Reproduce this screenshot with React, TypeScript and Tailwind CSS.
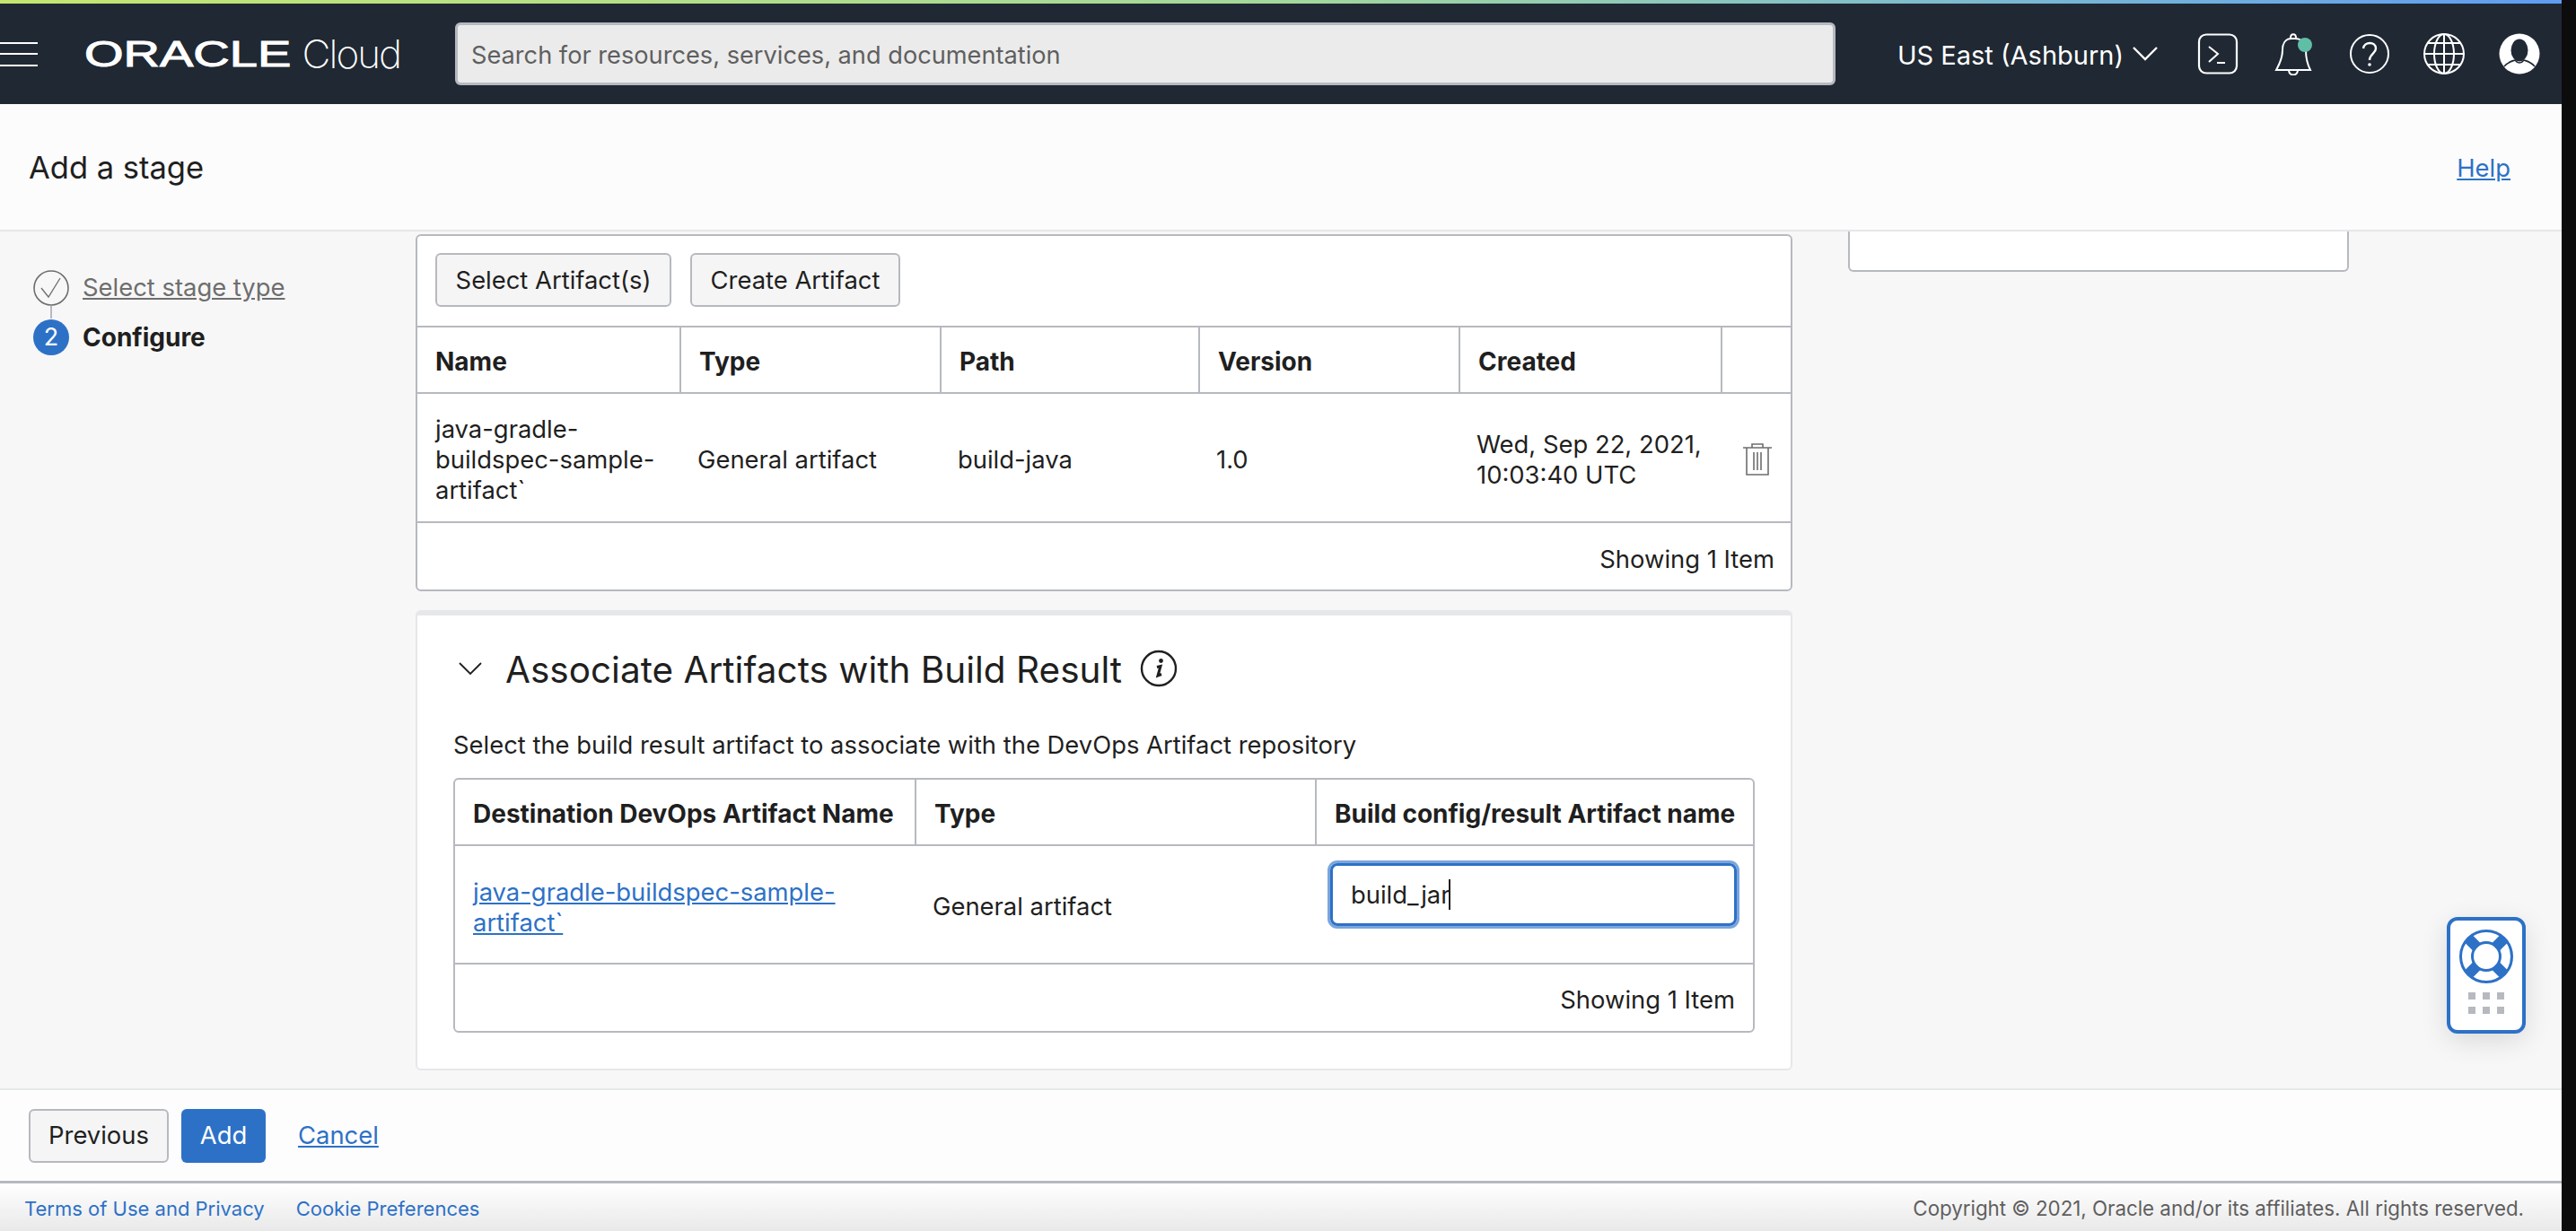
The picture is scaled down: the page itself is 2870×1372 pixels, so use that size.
import { ReactNode } from "react"

const hdrCell = "flex items-center px-5 pt-[4px] text-[28px] font-bold border-l-2 border-[#b6b9bf] first:border-l-0"

function Hamburger() {
  return (
    <div className="flex w-[42px] flex-col gap-[10.5px]">
      <div className="h-[2px] bg-white" />
      <div className="h-[2px] bg-white" />
      <div className="h-[2px] bg-white" />
    </div>
  )
}

function Logo() {
  return (
    <div className="ml-[52px] flex w-[352px] items-center text-white">
      <span className="inline-block w-[228px] origin-left scale-x-[1.4] font-['Liberation_Sans',sans-serif] text-[40px] leading-none [-webkit-text-stroke:1px_white]">
        ORACLE
      </span>
      <span className="ml-[15px] text-[44px] leading-none font-extralight tracking-[-2px]">Cloud</span>
    </div>
  )
}

function TopIcons() {
  return (
    <div className="flex items-center">
      <svg width="46" height="46" viewBox="0 0 46 46" fill="none" stroke="white" strokeWidth="2.2">
        <rect x="2" y="1.5" width="42" height="43" rx="8" />
        <path d="M13 15l10 8-10 9M22 33h9" strokeWidth="2" />
      </svg>
      <svg className="ml-[40px]" width="44" height="48" viewBox="0 0 44 48" fill="none" stroke="white" strokeWidth="2">
        <path d="M2 42h38c-3-6-5-12-5-22 0-8-5-13-12-13h-4c-7 0-10 6-10 13 0 10-4 16-7 22z" />
        <path d="M18 6c0-5 6-5 6 0M16 43c1 6 9 6 10 0" />
        <ellipse cx="34" cy="14" rx="8" ry="8" fill="#60bea6" stroke="none" />
      </svg>
      <svg className="ml-[39px]" width="46" height="46" viewBox="0 0 46 46" fill="none" stroke="white" strokeWidth="2">
        <circle cx="23" cy="23" r="21" />
        <path d="M16 17c1-8 14-8 14 0 0 6-7 6-7 13" strokeWidth="2.4" />
        <circle cx="23" cy="35" r="1.8" fill="white" stroke="none" />
      </svg>
      <svg className="ml-[36px]" width="48" height="48" viewBox="0 0 48 48" fill="none" stroke="white" strokeWidth="2">
        <circle cx="24" cy="24" r="22" />
        <ellipse cx="24" cy="24" rx="11" ry="22" />
        <path d="M24 2v44M2 24h44M6 12h36M6 36h36" />
      </svg>
      <svg className="ml-[37px]" width="46" height="46" viewBox="0 0 46 46">
        <circle cx="23" cy="23" r="22.5" fill="white" />
        <ellipse cx="23" cy="19" rx="9.5" ry="12.5" fill="#202833" />
        <path d="M6 37c4-5 9-6 12-7 3 4 7 4 10 0 3 1 8 2 12 7" fill="none" stroke="#202833" strokeWidth="1.6" />
      </svg>
    </div>
  )
}

function StepRail() {
  return (
    <aside className="w-[463px] shrink-0 pt-[42px] pl-[37px]">
      <div className="flex items-center">
        <svg width="40" height="40" viewBox="0 0 40 40" fill="none" stroke="#6e6e6e" strokeWidth="1.6">
          <circle cx="20" cy="20" r="19" />
          <path d="M9 20l8 10 13-21" strokeWidth="1.3" />
        </svg>
        <a className="ml-[15px] text-[27.4px] text-[#6e6e6e] underline">Select stage type</a>
      </div>
      <div className="ml-[19px] h-[14px] w-[2px] bg-[#b6b9bf]" />
      <div className="flex items-center">
        <div className="flex h-[40px] w-[40px] items-center justify-center rounded-full bg-[#2d71c7] text-[27px] text-white">2</div>
        <span className="ml-[15px] text-[28px] font-bold text-[#1f1f1f]">Configure</span>
      </div>
    </aside>
  )
}

function OutlineButton({ children, className = "" }: { children: ReactNode; className?: string }) {
  return (
    <button className={`flex h-[60px] items-center justify-center rounded-[6px] border-2 border-[#b6b9bf] bg-[#f5f5f5] text-[27.4px] text-[#1f1f1f] ${className}`}>
      {children}
    </button>
  )
}

function TrashIcon() {
  return (
    <svg width="32" height="36" viewBox="0 0 32 36" fill="none" stroke="#6e6e6e" strokeWidth="1.6">
      <path d="M0 5h32M10 5V1h12v4M4 5v30h24V5M12 10v20M16 10v20M20 10v20" />
    </svg>
  )
}

function ArtifactsCard() {
  return (
    <section className="rounded-[6px] border-2 border-[#b6b9bf] bg-white text-[27.4px] text-[#1f1f1f]">
      <div className="flex h-[100px] gap-[21px] pt-[19px] pl-[20px]">
        <OutlineButton className="w-[263px] pt-[2px]">Select Artifact(s)</OutlineButton>
        <OutlineButton className="w-[234px] pt-[2px]">Create Artifact</OutlineButton>
      </div>
      <div className="grid h-[76px] grid-cols-[292px_290px_288px_290px_292px_1fr] border-y-2 border-[#b6b9bf]">
        <div className={hdrCell}>Name</div>
        <div className={hdrCell}>Type</div>
        <div className={hdrCell}>Path</div>
        <div className={hdrCell}>Version</div>
        <div className={hdrCell}>Created</div>
        <div className={hdrCell} />
      </div>
      <div className="grid h-[144px] grid-cols-[292px_290px_288px_290px_292px_1fr] items-center border-b-2 border-[#b6b9bf] pt-[4px] leading-[34px]">
        <div className="px-5 whitespace-nowrap">java-gradle-<br />buildspec-sample-<br />artifact`</div>
        <div className="px-5">General artifact</div>
        <div className="px-5">build-java</div>
        <div className="px-5">1.0</div>
        <div className="px-5 whitespace-nowrap">Wed, Sep 22, 2021,<br />10:03:40 UTC</div>
        <div className="flex justify-center pl-[4px]"><TrashIcon /></div>
      </div>
      <div className="flex h-[74px] items-center justify-end pt-[7px] pr-[18px]">Showing 1 Item</div>
    </section>
  )
}

function AssociateCard() {
  return (
    <section className="mt-[21px] rounded-[6px] border-x-2 border-t-[6px] border-b-2 border-[#e6e7e9] bg-white px-[40px] pt-[29px] pb-[40px] text-[27.4px] text-[#1f1f1f]">
      <div className="flex h-[60px] items-center">
        <svg className="ml-[6px]" width="26" height="14" viewBox="0 0 26 14" fill="none" stroke="#1f1f1f" strokeWidth="1.8">
          <path d="M1 1l12 12L25 1" />
        </svg>
        <h2 className="ml-[26px] pt-[4px] text-[40.5px] font-normal whitespace-nowrap">Associate Artifacts with Build Result</h2>
        <svg className="ml-[20px]" width="42" height="42" viewBox="0 0 42 42" fill="none" stroke="#1f1f1f" strokeWidth="2.4">
          <circle cx="21" cy="21" r="19" />
          <path d="M19 19.5l4-1-3 10.5 4-1.5" strokeWidth="3" />
          <circle cx="23.5" cy="12.5" r="2.4" fill="#1f1f1f" stroke="none" />
        </svg>
      </div>
      <p className="mt-[38px] h-[34px] leading-[34px] whitespace-nowrap">Select the build result artifact to associate with the DevOps Artifact repository</p>
      <div className="mt-[20px] rounded-[6px] border-2 border-[#b6b9bf]">
        <div className="grid h-[74px] grid-cols-[512px_446px_1fr] border-b-2 border-[#b6b9bf]">
          <div className={`${hdrCell} whitespace-nowrap`}>Destination DevOps Artifact Name</div>
          <div className={hdrCell}>Type</div>
          <div className={`${hdrCell} whitespace-nowrap`}>Build config/result Artifact name</div>
        </div>
        <div className="grid h-[132px] grid-cols-[512px_446px_1fr] items-center border-b-2 border-[#b6b9bf] leading-[34px]">
          <a className="px-5 pt-[6px] whitespace-nowrap text-[#2d71c7] underline">java-gradle-buildspec-sample-<br />artifact`</a>
          <div className="px-5 pt-[4px]">General artifact</div>
          <div className="pr-[18px] pl-[17px]">
            <div className="-mt-[22px] flex h-[70px] items-center rounded-[8px] border-[3px] border-[#2d71c7] pl-[20px] shadow-[0_0_0_3px_#7ba5dc]">
              build_jar<span className="-ml-[1px] h-[34px] w-[2px] bg-[#1f1f1f]" />
            </div>
          </div>
        </div>
        <div className="flex h-[74px] items-center justify-end pt-[6px] pr-5">Showing 1 Item</div>
      </div>
    </section>
  )
}

function HelpWidget() {
  return (
    <div className="absolute top-[1022px] left-[2726px] flex h-[130px] w-[88px] flex-col items-center rounded-[12px] border-4 border-[#2d71c7] bg-white pt-[10px] shadow-[0_8px_30px_rgba(0,0,0,0.12)]">
      <svg width="60" height="60" viewBox="0 0 60 60" fill="none" stroke="#2d71c7">
        <circle cx="30" cy="30" r="28.5" strokeWidth="3" />
        <circle cx="30" cy="30" r="15.5" strokeWidth="3" />
        <path d="M10 10l10 10M50 10L40 20M10 50l10-10M50 50L40 40" strokeWidth="12" />
      </svg>
      <div className="mt-[10px] grid grid-cols-3 gap-[8px]">
        {[0, 1, 2, 3, 4, 5].map((i) => (
          <div key={i} className="h-[8px] w-[8px] bg-[#b6b9bf]" />
        ))}
      </div>
    </div>
  )
}

export default function App() {
  return (
    <div className="relative flex h-[1372px] w-[2870px] overflow-hidden bg-[#0c0c0c] font-['Inter',sans-serif]">
      <div className="flex w-[2854px] shrink-0 flex-col">
        <div className="h-[4px] bg-gradient-to-r from-[#c4e670] via-[#a4d89a] to-[#5f9cf3]" />
        <header className="flex h-[112px] items-center bg-[#202833]">
          <Hamburger />
          <Logo />
          <div className="ml-[61px] flex h-[70px] w-[1538px] items-center rounded-[6px] border-[3px] border-[#b6b9bf] bg-[#ebebeb] pt-[4px] pl-[15px] text-[27.2px] text-[#5f5f5f]">
            Search for resources, services, and documentation
          </div>
          <div className="ml-[69px] flex items-center text-[29px] text-white">
            <span className="pt-[4px]">US East (Ashburn)</span>
            <svg className="ml-[10px]" width="28" height="16" viewBox="0 0 28 16" fill="none" stroke="white" strokeWidth="2.4">
              <path d="M1 1l13 13L27 1" />
            </svg>
          </div>
          <div className="ml-[44px]"><TopIcons /></div>
        </header>
        <div className="flex h-[140px] items-center justify-between bg-[#fcfcfc] pr-[57px] pl-[32px]">
          <h1 className="pt-[2px] text-[34.5px] font-normal text-[#1f1f1f]">Add a stage</h1>
          <a className="pt-[4px] text-[27.4px] text-[#2d71c7] underline">Help</a>
        </div>
        <div className="flex min-h-0 flex-1 overflow-hidden border-t-2 border-[#e6e7e9] bg-[#f7f7f7]">
          <StepRail />
          <main className="w-[1534px] shrink-0 pt-[3px]">
            <ArtifactsCard />
            <AssociateCard />
          </main>
          <div className="ml-[62px] h-[45px] w-[558px] rounded-b-[6px] border-x-2 border-b-2 border-[#b6b9bf] bg-white" />
        </div>
        <div className="flex h-[106px] items-center gap-[14px] border-t-2 border-b-[3px] border-t-[#e6e7e9] border-b-[#b6b9bf] bg-[#fdfdfd] pl-[32px] text-[27.4px]">
          <OutlineButton className="w-[156px]">Previous</OutlineButton>
          <button className="h-[60px] w-[94px] rounded-[6px] bg-[#2d71c7] text-white">Add</button>
          <a className="ml-[22px] text-[#2d71c7] underline">Cancel</a>
        </div>
        <footer className="flex h-[53px] items-center justify-between bg-gradient-to-b from-[#ffffff] to-[#e9e9e9] pt-[3px] pr-[42px] pl-[27px] text-[22px]">
          <div className="flex gap-[35px] text-[#2d71c7]">
            <a>Terms of Use and Privacy</a>
            <a>Cookie Preferences</a>
          </div>
          <span className="text-[22.3px] text-[#5f5f5f]">Copyright © 2021, Oracle and/or its affiliates. All rights reserved.</span>
        </footer>
      </div>
      <HelpWidget />
    </div>
  )
}
